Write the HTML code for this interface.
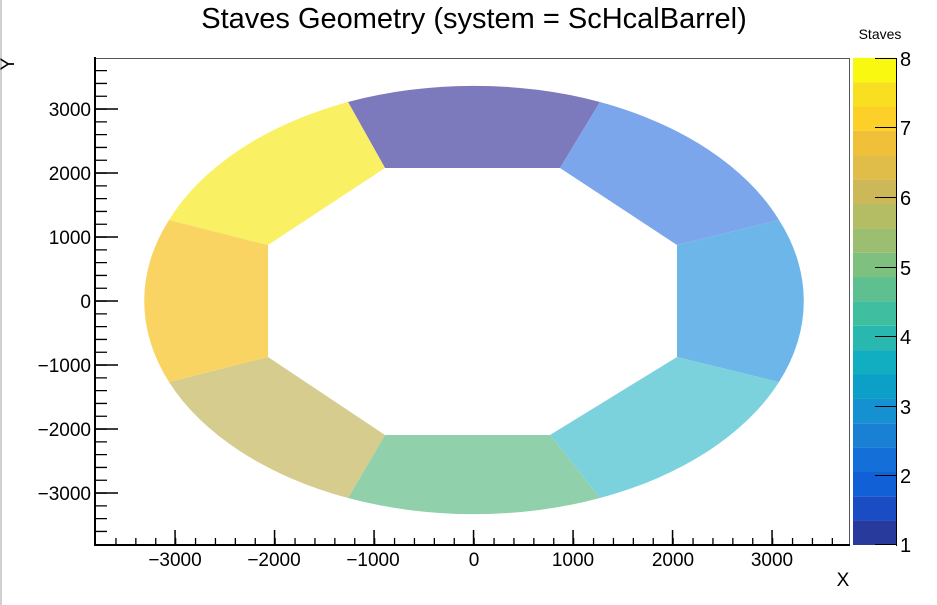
<!DOCTYPE html>
<html><head><meta charset="utf-8"><style>
html,body{margin:0;padding:0;background:#fff;}
svg{display:block;font-family:"Liberation Sans",Arial,sans-serif;}
</style></head><body>
<svg width="937" height="605" viewBox="0 0 937 605" xmlns="http://www.w3.org/2000/svg">
<rect x="0" y="0" width="937" height="605" fill="#fff"/>
<rect x="0" y="0" width="2" height="605" fill="#d0d0d0"/>
<text x="474" y="28" font-size="29" text-anchor="middle" fill="#000">Staves Geometry (system = ScHcalBarrel)</text>

<g stroke="none">
<path d="M385,168 L348,102 A330,213 0 0,1 600,102 L560,168 Z" fill="#7c7abc"/>
<path d="M560,168 L600,102 A330,213 0 0,1 779,220 L677,245 Z" fill="#7ca6ec"/>
<path d="M677,245 L779,220 A330,213 0 0,1 779,382 L677,357 Z" fill="#6cb6ea"/>
<path d="M677,357 L779,382 A330,213 0 0,1 600,498 L550,435 Z" fill="#7cd2dc"/>
<path d="M550,435 L600,498 A330,213 0 0,1 348,498 L385,435 Z" fill="#90d0aa"/>
<path d="M385,435 L348,498 A330,213 0 0,1 169,382 L268,357 Z" fill="#d6cc8e"/>
<path d="M268,357 L169,382 A330,213 0 0,1 169,220 L268,245 Z" fill="#fad462"/>
<path d="M268,245 L169,220 A330,213 0 0,1 348,102 L385,168 Z" fill="#faf064"/>
</g>

<line x1="95" y1="58.5" x2="850" y2="58.5" stroke="#555" stroke-width="1"/>
<line x1="849.5" y1="58" x2="849.5" y2="545" stroke="#555" stroke-width="1"/>
<line x1="95" y1="57" x2="95" y2="546" stroke="#000" stroke-width="2"/>
<line x1="94" y1="545" x2="850" y2="545" stroke="#000" stroke-width="2"/>

<line x1="101.5" y1="70" x2="101.5" y2="543" stroke="#000" stroke-width="11" stroke-dasharray="1.3 11.5"/>
<line x1="107" y1="108.3" x2="107" y2="495" stroke="#000" stroke-width="22" stroke-dasharray="1.5 62.5"/>
<line x1="115.3" y1="541.5" x2="845" y2="541.5" stroke="#000" stroke-width="7" stroke-dasharray="1.3 18.6"/>
<line x1="174.3" y1="537.5" x2="775" y2="537.5" stroke="#000" stroke-width="15" stroke-dasharray="1.5 98"/>

<g font-size="19" fill="#000" text-anchor="end">
<text x="91" y="116">3000</text>
<text x="91" y="180">2000</text>
<text x="91" y="244">1000</text>
<text x="91" y="308">0</text>
<text x="91" y="372">−1000</text>
<text x="91" y="436">−2000</text>
<text x="91" y="500">−3000</text>
</g>
<g font-size="19" fill="#000" text-anchor="middle">
<text x="175" y="566">−3000</text>
<text x="274" y="566">−2000</text>
<text x="373" y="566">−1000</text>
<text x="474" y="566">0</text>
<text x="573" y="566">1000</text>
<text x="673" y="566">2000</text>
<text x="772" y="566">3000</text>
</g>
<text x="843" y="586" font-size="19" text-anchor="middle">X</text>
<text transform="translate(14,64) rotate(-90)" font-size="19" text-anchor="middle">Y</text>

<g>
<rect x="853" y="520.6" width="43" height="24.4" fill="#283a9c"/>
<rect x="853" y="496.3" width="43" height="24.4" fill="#1a4cc4"/>
<rect x="853" y="471.9" width="43" height="24.4" fill="#1260d6"/>
<rect x="853" y="447.6" width="43" height="24.4" fill="#1470d8"/>
<rect x="853" y="423.2" width="43" height="24.4" fill="#1a80d4"/>
<rect x="853" y="398.8" width="43" height="24.4" fill="#1590d0"/>
<rect x="853" y="374.5" width="43" height="24.4" fill="#0ca0c8"/>
<rect x="853" y="350.1" width="43" height="24.4" fill="#10aec0"/>
<rect x="853" y="325.8" width="43" height="24.4" fill="#28b8b0"/>
<rect x="853" y="301.4" width="43" height="24.4" fill="#40bea0"/>
<rect x="853" y="277" width="43" height="24.4" fill="#5ec090"/>
<rect x="853" y="252.7" width="43" height="24.4" fill="#7ec080"/>
<rect x="853" y="228.3" width="43" height="24.4" fill="#9cbe70"/>
<rect x="853" y="204" width="43" height="24.4" fill="#b4bc64"/>
<rect x="853" y="179.6" width="43" height="24.4" fill="#ccb858"/>
<rect x="853" y="155.2" width="43" height="24.4" fill="#e0bc48"/>
<rect x="853" y="130.9" width="43" height="24.4" fill="#f0c038"/>
<rect x="853" y="106.5" width="43" height="24.4" fill="#fcd028"/>
<rect x="853" y="82.2" width="43" height="24.4" fill="#f8e020"/>
<rect x="853" y="57.8" width="43" height="24.4" fill="#f8f810"/>
</g>
<line x1="896.5" y1="58" x2="896.5" y2="546" stroke="#000" stroke-width="1"/>
<g stroke="#000" stroke-width="1">
<line x1="875" y1="58.5" x2="896" y2="58.5"/>
<line x1="875" y1="127.5" x2="896" y2="127.5"/>
<line x1="875" y1="197.5" x2="896" y2="197.5"/>
<line x1="875" y1="267.5" x2="896" y2="267.5"/>
<line x1="875" y1="336.5" x2="896" y2="336.5"/>
<line x1="875" y1="406.5" x2="896" y2="406.5"/>
<line x1="875" y1="475.5" x2="896" y2="475.5"/>
<line x1="875" y1="544.5" x2="896" y2="544.5"/>
</g>
<g font-size="20" fill="#000">
<text x="900" y="66">8</text>
<text x="900" y="135">7</text>
<text x="900" y="205">6</text>
<text x="900" y="275">5</text>
<text x="900" y="344">4</text>
<text x="900" y="414">3</text>
<text x="900" y="483">2</text>
<text x="900" y="552">1</text>
</g>
<text x="880" y="39" font-size="14" text-anchor="middle">Staves</text>
</svg>
</body></html>
